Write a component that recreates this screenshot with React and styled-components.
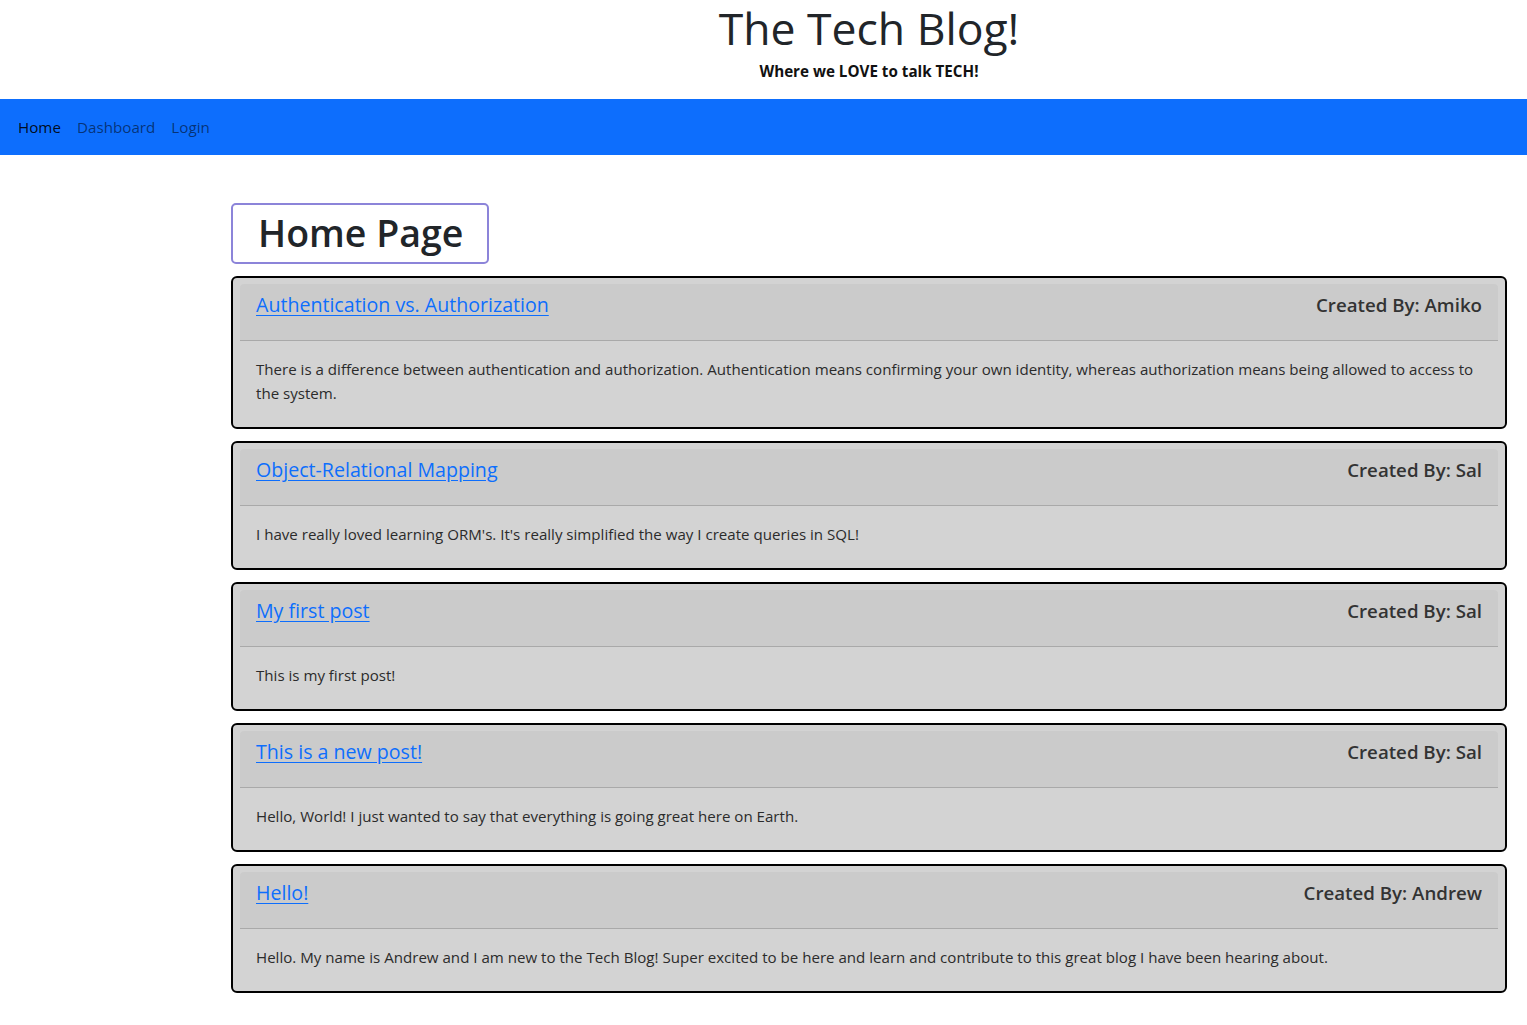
import React from "react"
import styled, { createGlobalStyle } from "styled-components"

const GlobalStyle = createGlobalStyle`
  body {
    margin: 0;
    background: #fff;
    font-family: "Open Sans", "Noto Sans", sans-serif;
    color: #212529;
  }
`

const posts = [
  {
    title: "Authentication vs. Authorization",
    author: "Amiko",
    body:
      "There is a difference between authentication and authorization. Authentication means confirming your own identity, whereas authorization means being allowed to access to the system.",
  },
  {
    title: "Object-Relational Mapping",
    author: "Sal",
    body:
      "I have really loved learning ORM's. It's really simplified the way I create queries in SQL!",
  },
  { title: "My first post", author: "Sal", body: "This is my first post!" },
  {
    title: "This is a new post!",
    author: "Sal",
    body:
      "Hello, World! I just wanted to say that everything is going great here on Earth.",
  },
  {
    title: "Hello!",
    author: "Andrew",
    body:
      "Hello. My name is Andrew and I am new to the Tech Blog! Super excited to be here and learn and contribute to this great blog I have been hearing about.",
  },
]

const Header = styled.header`
  height: 99px;
  padding: 1px 0 0 211px;
  box-sizing: border-box;
  display: flex;
  flex-direction: column;
  align-items: center;
`

const SiteTitle = styled.h1`
  margin: 0;
  font-size: 44.5px;
  font-weight: 500;
  line-height: 54px;
`

const Tagline = styled.p`
  margin: 6px 0 0;
  font-size: 15.2px;
  font-weight: 700;
  line-height: 20px;
  color: #111;
`

const Nav = styled.nav`
  height: 56px;
  background: #0d6efd;
  display: flex;
  align-items: center;
  padding-left: 10px;
`

const NavLink = styled.a`
  padding: 0 8px;
  font-size: 15.2px;
  text-decoration: none;
  color: ${props => (props.active ? "rgba(0,0,0,0.9)" : "rgba(0,0,0,0.55)")};
`

const Main = styled.main`
  padding: 48px 20px 20px 231px;
  display: flex;
  flex-direction: column;
  align-items: flex-start;
  gap: 12px;
`

const PageTitle = styled.h2`
  margin: 0;
  height: 61px;
  box-sizing: border-box;
  border: 2px solid #8c84d9;
  border-radius: 5px;
  padding: 0 24px 0 25px;
  font-size: 37.5px;
  font-weight: 600;
  line-height: 56px;
`

const Card = styled.article`
  align-self: stretch;
  border: 2px solid #000;
  border-radius: 6px;
  background: #d3d3d3;
  padding: 6px 7px;
`

const CardHeader = styled.div`
  display: flex;
  justify-content: space-between;
  background: #cbcbcb;
  border-bottom: 1px solid #a9a9a9;
  border-radius: 4px 4px 0 0;
  padding: 6px 16px 20px;
  line-height: 30px;
`

const PostLink = styled.a`
  font-size: 19.6px;
  font-weight: 500;
  color: #0d6efd;
  text-decoration: underline;
  text-underline-offset: 3px;
`

const Author = styled.span`
  font-size: 18.7px;
  font-weight: 600;
  color: #333;
`

const CardBody = styled.p`
  margin: 0;
  padding: 16px;
  font-size: 15.1px;
  line-height: 24px;
  color: #2b2b2b;
`

export default function App() {
  return (
    <>
      <GlobalStyle />
      <Header>
        <SiteTitle>The Tech Blog!</SiteTitle>
        <Tagline>Where we LOVE to talk TECH!</Tagline>
      </Header>
      <Nav>
        <NavLink href="#" active>
          Home
        </NavLink>
        <NavLink href="#">Dashboard</NavLink>
        <NavLink href="#">Login</NavLink>
      </Nav>
      <Main>
        <PageTitle>Home Page</PageTitle>
        {posts.map(post => (
          <Card key={post.title}>
            <CardHeader>
              <PostLink href="#">{post.title}</PostLink>
              <Author>Created By: {post.author}</Author>
            </CardHeader>
            <CardBody>{post.body}</CardBody>
          </Card>
        ))}
      </Main>
    </>
  )
}
